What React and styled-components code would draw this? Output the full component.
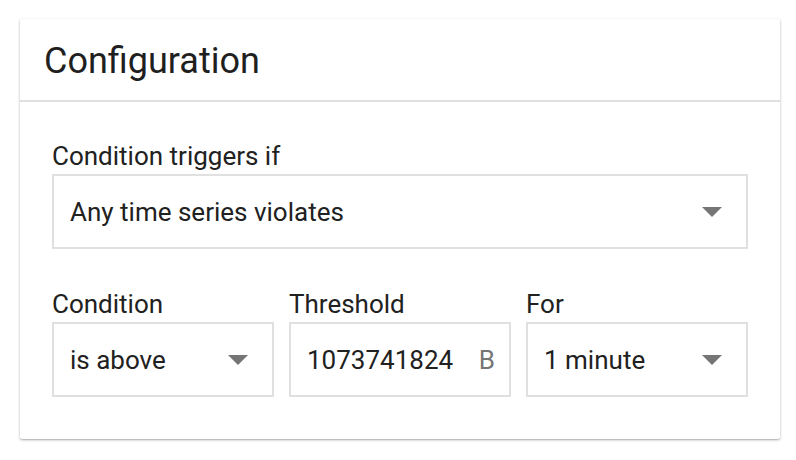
import React from 'react'
import styled, { createGlobalStyle } from 'styled-components';

const GlobalStyle = createGlobalStyle`
  html, body {
    margin: 0;
    padding: 0;
    background: #ffffff;
  }
  body {
    font-family: Roboto, "Liberation Sans", Arial, sans-serif;
    color: #212121;
  }
`;

const Page = styled.div`
  padding: 19px 16px 22px 20px;
`;

const Card = styled.div`
  width: 760px;
  background: #fff;
  border-radius: 2px;
  box-shadow: 0 1px 3px rgba(0, 0, 0, 0.28), 0 1px 1px rgba(0, 0, 0, 0.1);
`;

const CardHeader = styled.div`
  height: 81px;
  display: flex;
  align-items: center;
  padding: 0 24px;
  border-bottom: 2px solid #e0e0e0;
`;

const Title = styled.div`
  font-size: 36px;
  line-height: 42px;
  font-weight: 400;
  color: #1f1f1f;
  margin-top: 2px;
`;

const CardBody = styled.div`
  padding: 39px 32px 42px 32px;
  display: flex;
  flex-direction: column;
  gap: 40px;
`;

const Row = styled.div`
  display: flex;
  gap: 15px;
`;

const Field = styled.div`
  display: flex;
  flex-direction: column;
  gap: 3px;
  flex: ${({grow}) => grow ? 1 : '0 0 222px'};
  width: ${({grow}) => grow ? 'auto' : '222px'};
`;

const Label = styled.div`
  font-size: 26px;
  line-height: 30px;
  color: #212121;
`;

const Box = styled.div`
  box-sizing: border-box;
  height: 75px;
  border: 2px solid #e0e0e0;
  display: flex;
  align-items: center;
  justify-content: space-between;
  padding: 0 24px 0 16px;
`;

const Value = styled.div`
  font-size: 26px;
  line-height: 30px;
  color: #212121;
  white-space: nowrap;
`;

const Suffix = styled.div`
  font-size: 26px;
  line-height: 30px;
  color: #757575;
  margin-right: -10px;
`;

const Arrow = styled.div`
  width: 0;
  height: 0;
  border-left: 10px solid transparent;
  border-right: 10px solid transparent;
  border-top: 10px solid #757575;
`;

const Select = ({value}) => (
  <Box>
    <Value>{value}</Value>
    <Arrow />
  </Box>
);

export default function App() {
  return (
    <>
      <GlobalStyle />
      <Page>
        <Card>
          <CardHeader>
            <Title>Configuration</Title>
          </CardHeader>
          <CardBody>
            <Row>
              <Field grow>
                <Label>Condition triggers if</Label>
                <Select value="Any time series violates" />
              </Field>
            </Row>
            <Row>
              <Field>
                <Label>Condition</Label>
                <Select value="is above" />
              </Field>
              <Field>
                <Label>Threshold</Label>
                <Box>
                  <Value>1073741824</Value>
                  <Suffix>B</Suffix>
                </Box>
              </Field>
              <Field>
                <Label>For</Label>
                <Select value="1 minute" />
              </Field>
            </Row>
          </CardBody>
        </Card>
      </Page>
    </>
  )
}
